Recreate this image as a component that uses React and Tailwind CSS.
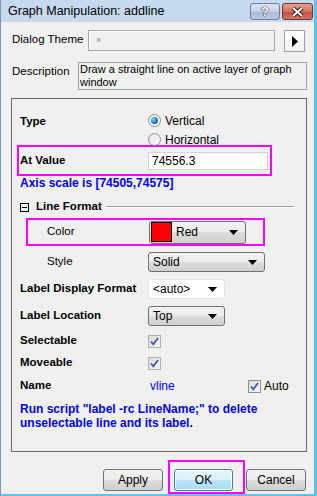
import React from "react";

const font = { fontFamily: '"Liberation Sans", Arial, sans-serif' };

const Arrow = () => (
  <svg width="9" height="5" viewBox="0 0 9 5" className="shrink-0">
    <path d="M0 0h9L4.5 5z" fill="#000" />
  </svg>
);

const Combo = ({ w, children, white }) => (
  <div
    className={`flex h-[20px] items-center justify-between rounded-[3px] border pl-[4px] pr-[7px] text-[12px] ${
      white
        ? "border-[#e3e3e3] bg-white"
        : "border-[#707070] bg-[linear-gradient(#f2f2f2_0%,#ebebeb_50%,#dddddd_50%,#cfcfcf_100%)]"
    } ${w}`}
  >
    <span>{children}</span>
    <Arrow />
  </div>
);

const Check = ({ dark }) => (
  <div
    className={`flex h-[13px] w-[13px] items-center justify-center border ${
      dark ? "border-[#8e8f8f]" : "border-[#b1b1b1]"
    } bg-[linear-gradient(135deg,#dcdcdc,#f7f7f7)]`}
  >
    <svg width="9" height="9" viewBox="0 0 9 9">
      <path d="M1 4.5l2.3 2.8L8 1" fill="none" stroke="#3c58a8" strokeWidth="1.8" />
    </svg>
  </div>
);

const Radio = ({ on }) => (
  <div className="flex h-[13px] w-[13px] items-center justify-center rounded-full border border-[#8e8f8f] bg-[linear-gradient(135deg,#e6e6e6,#fafafa)]">
    {on && (
      <div className="h-[7px] w-[7px] rounded-full bg-[radial-gradient(circle_at_35%_35%,#7fd0ff,#1a6fb7_60%,#0d4f8f)]" />
    )}
  </div>
);

const Label = ({ children, className = "" }) => (
  <div className={`w-[128px] shrink-0 text-[11.5px] font-bold ${className}`}>{children}</div>
);

const btn =
  "h-[22px] w-[60px] rounded-[3px] border border-[#707070] bg-[linear-gradient(#f2f2f2_0%,#ebebeb_50%,#dddddd_50%,#cfcfcf_100%)] text-[12px]";

export default function App() {
  return (
    <div
      style={font}
      className="flex h-[496px] w-[317px] flex-col border-b-2 border-l border-r-[3px] border-b-[#5ec2ec] border-l-[#7e97b5] border-r-[#5ec2ec] bg-[#f0f0f0] text-black"
    >
      {/* title bar */}
      <div className="flex h-[22px] shrink-0 items-center justify-between bg-[#c6d9ef] pl-[7px] pr-[1px]">
        <span className="text-[12.5px] text-black">Graph Manipulation: addline</span>
        <div className="flex items-center gap-[2px] pt-[1px]">
          <div className="flex h-[17px] w-[30px] items-center justify-center rounded-[3px] border border-[#6d7f99] bg-[linear-gradient(#d9e4f1_0%,#c2d2e6_50%,#a9bdd6_51%,#b7c9df_100%)]">
            <span className="text-[13px] font-bold leading-none text-white [text-shadow:0_0_1px_#333,0_0_1px_#333,0_0_1px_#333]">
              ?
            </span>
          </div>
          <div className="flex h-[17px] w-[31px] items-center justify-center rounded-[3px] border border-[#7a2d24] bg-[linear-gradient(#e5a093_0%,#d2725f_50%,#c1493a_51%,#d3786a_100%)]">
            <svg width="13" height="10" viewBox="0 0 13 10">
              <path d="M2 1l9 8M11 1l-9 8" stroke="#3a1a16" strokeWidth="4" />
              <path d="M2 1l9 8M11 1l-9 8" stroke="#fff" strokeWidth="2" />
            </svg>
          </div>
        </div>
      </div>

      {/* header */}
      <div className="flex h-[30px] shrink-0 items-end pl-[11px] pr-[9px]">
        <span className="w-[76px] shrink-0 pb-[4px] text-[11.5px]">Dialog Theme</span>
        <div className="mb-[1px] flex h-[21px] w-[190px] items-center border border-[#a9a9a9] bg-[#f0f0f0] pl-[7px] text-[9px] text-[#888] shadow-[inset_1px_1px_0_#fff]">
          ×
        </div>
        <div className="ml-[9px] flex h-[22px] w-[21px] items-center justify-center border border-[#a0a0a0] bg-[linear-gradient(#ffffff,#f0f0f0)]">
          <svg width="6" height="11" viewBox="0 0 6 11">
            <path d="M0 0l6 5.5L0 11z" fill="#000" />
          </svg>
        </div>
      </div>
      <div className="mt-[10px] flex h-[28px] shrink-0 items-start pl-[11px]">
        <span className="w-[66px] shrink-0 pt-[1px] text-[11.5px]">Description</span>
        <div className="h-[28px] w-[229px] border border-[#a0a0a0] px-[1px] text-[11px] leading-[13px]">
          Draw a straight line on active layer of graph window
        </div>
      </div>

      {/* main panel */}
      <div className="ml-[10px] mt-[8px] w-[296px] flex-1 border border-[#6b6b6b] pt-[12px]">
        <div className="flex pl-[8px]">
          <Label className="pt-[2px]">Type</Label>
          <div className="flex flex-col text-[12px]">
            <div className="flex h-[19px] items-center gap-[4px]">
              <Radio on />
              <span>Vertical</span>
            </div>
            <div className="flex h-[19px] items-center gap-[4px]">
              <Radio />
              <span>Horizontal</span>
            </div>
          </div>
        </div>

        <div className="ml-[5px] mt-[-4px] flex h-[31px] w-[255px] items-center border-2 border-[#ff00ff] pl-[1px]">
          <Label>At Value</Label>
          <div className="flex h-[18px] w-[120px] items-center border border-[#d3d3d3] bg-white pl-[3px] text-[12px]">
            74556.3
          </div>
        </div>

        <div className="h-[14px] pl-[8px] text-[12px] font-bold leading-[14px] text-[#0000ff]">
          Axis scale is [74505,74575]
        </div>

        <div className="mt-[10px] flex h-[14px] items-center pl-[8px] pr-[12px]">
          <div className="flex h-[9px] w-[9px] items-center justify-center border border-black">
            <div className="h-[1px] w-[5px] bg-black" />
          </div>
          <span className="ml-[7px] text-[11.5px] font-bold">Line Format</span>
          <div className="ml-[4px] h-[2px] flex-1 border-t border-b border-t-[#a0a0a0] border-b-white" />
        </div>

        <div className="ml-[14px] mt-[4px] flex h-[28px] w-[239px] items-center border-2 border-[#ff00ff]">
          <span className="w-[121px] shrink-0 pl-[19px] text-[11.5px]">Color</span>
          <div className="flex h-[23px] w-[97px] items-center rounded-[3px] border border-[#707070] bg-[linear-gradient(#f2f2f2_0%,#ebebeb_50%,#dddddd_50%,#cfcfcf_100%)] pl-[1px] pr-[7px] text-[12px]">
            <div className="h-[20px] w-[21px] border border-black bg-[#ff0000]" />
            <span className="ml-[4px] flex-1">Red</span>
            <Arrow />
          </div>
        </div>

        <div className="mt-[6px] flex items-center">
          <span className="w-[136px] shrink-0 pl-[35px] text-[11.5px]">Style</span>
          <Combo w="w-[117px]">Solid</Combo>
        </div>

        <div className="mt-[7px] flex items-center pl-[8px]">
          <Label>Label Display Format</Label>
          <Combo w="w-[77px]" white>
            &lt;auto&gt;
          </Combo>
        </div>

        <div className="mt-[7px] flex items-center pl-[8px]">
          <Label>Label Location</Label>
          <Combo w="w-[77px]">Top</Combo>
        </div>

        <div className="mt-[8px] flex h-[14px] items-center pl-[8px]">
          <Label>Selectable</Label>
          <Check />
        </div>

        <div className="mt-[8px] flex h-[14px] items-center pl-[8px]">
          <Label>Moveable</Label>
          <Check />
        </div>

        <div className="mt-[9px] flex h-[14px] items-center pl-[8px]">
          <Label>Name</Label>
          <span className="w-[100px] pl-[2px] text-[12px] text-[#0000ff]">vline</span>
          <Check dark />
          <span className="ml-[3px] text-[12px]">Auto</span>
        </div>

        <div className="mt-[9px] pl-[8px] text-[12px] font-bold leading-[14px] text-[#0000ff]">
          Run script "label -rc LineName;" to delete
          <br />
          unselectable line and its label.
        </div>
      </div>

      {/* buttons */}
      <div className="mt-[8px] flex h-[34px] shrink-0 items-start pl-[102px]">
        <button className={`mt-[9px] ${btn}`}>Apply</button>
        <div className="relative ml-[5px] flex h-[34px] w-[77px] items-start border-2 border-[#ff00ff] pl-[4px] pt-[7px]">
          <button className="h-[22px] w-[59px] rounded-[3px] border border-[#3c7fb1] bg-[linear-gradient(#eaf6fd_0%,#d9f0fc_50%,#bee6fd_50%,#a7d9f5_100%)] text-[12px] shadow-[inset_0_0_0_1px_#fff]">
            OK
          </button>
        </div>
        <button className={`ml-[1px] mt-[9px] ${btn}`}>Cancel</button>
      </div>
    </div>
  );
}
